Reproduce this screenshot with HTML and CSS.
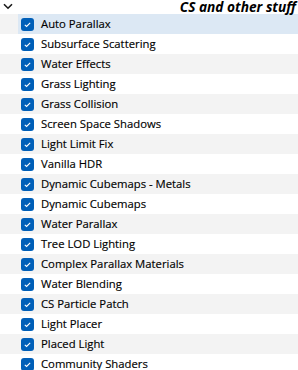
FILE: index.html
```html
<!DOCTYPE html>
<html>
<head>
<meta charset="utf-8">
<link rel="stylesheet" href="styles.css">
</head>
<body>
<div class="panel">
  <div class="header">
    <svg class="chev" width="10" height="7" viewBox="0 0 10 7"><path d="M1 1.2 L5 5.2 L9 1.2" fill="none" stroke="#1a1a1a" stroke-width="1.6"/></svg>
    <span class="title">CS and other stuff</span>
  </div>
  <ul class="list">
    <li class="row selected"><span class="cb"></span><span class="lbl">Auto Parallax</span></li>
    <li class="row"><span class="cb"></span><span class="lbl">Subsurface Scattering</span></li>
    <li class="row"><span class="cb"></span><span class="lbl">Water Effects</span></li>
    <li class="row"><span class="cb"></span><span class="lbl">Grass Lighting</span></li>
    <li class="row"><span class="cb"></span><span class="lbl">Grass Collision</span></li>
    <li class="row"><span class="cb"></span><span class="lbl">Screen Space Shadows</span></li>
    <li class="row"><span class="cb"></span><span class="lbl">Light Limit Fix</span></li>
    <li class="row"><span class="cb"></span><span class="lbl">Vanilla HDR</span></li>
    <li class="row"><span class="cb"></span><span class="lbl">Dynamic Cubemaps - Metals</span></li>
    <li class="row"><span class="cb"></span><span class="lbl">Dynamic Cubemaps</span></li>
    <li class="row"><span class="cb"></span><span class="lbl">Water Parallax</span></li>
    <li class="row"><span class="cb"></span><span class="lbl">Tree LOD Lighting</span></li>
    <li class="row"><span class="cb"></span><span class="lbl">Complex Parallax Materials</span></li>
    <li class="row"><span class="cb"></span><span class="lbl">Water Blending</span></li>
    <li class="row"><span class="cb"></span><span class="lbl">CS Particle Patch</span></li>
    <li class="row"><span class="cb"></span><span class="lbl">Light Placer</span></li>
    <li class="row"><span class="cb"></span><span class="lbl">Placed Light</span></li>
    <li class="row"><span class="cb"></span><span class="lbl">Community Shaders</span></li>
  </ul>
</div>
</body>
</html>
```
FILE: styles.css
```css
html, body {
  margin: 0;
  padding: 0;
  background: #ffffff;
  overflow: hidden;
}
.panel {
  width: 298px;
  font-family: "Open Sans", "Noto Sans", sans-serif;
  color: #000;
}
.header {
  height: 14px;
  display: flex;
  align-items: flex-start;
  justify-content: space-between;
}
.chev {
  margin: 3px 0 0 3px;
}
.title {
  font-weight: 700;
  font-style: italic;
  font-size: 13.7px;
  line-height: 13px;
  margin-right: 2px;
  letter-spacing: 0;
}
.list {
  list-style: none;
  margin: 0;
  padding: 0;
}
.row {
  height: 20px;
  display: flex;
  align-items: center;
  background: #ffffff;
}
.row:nth-child(odd) {
  background: #f3f3f3;
}
.row.selected {
  background: linear-gradient(to right, #f3f3f3 18px, #dce8f4 18px);
}
.cb {
  width: 13px;
  height: 13px;
  margin-left: 21px;
  border-radius: 3px;
  background: #005fb8 url("data:image/svg+xml,%3Csvg xmlns='http://www.w3.org/2000/svg' width='13' height='13' viewBox='0 0 13 13'%3E%3Cpath d='M3.8 6.8 L5.6 8.5 L9.2 4.9' fill='none' stroke='white' stroke-width='1.1'/%3E%3C/svg%3E") no-repeat center;
  flex: none;
}
.lbl {
  margin-left: 7px;
  font-size: 11.3px;
  line-height: 20px;
  white-space: nowrap;
  color: #000;
  -webkit-text-stroke: 0.15px #000;
}
```
